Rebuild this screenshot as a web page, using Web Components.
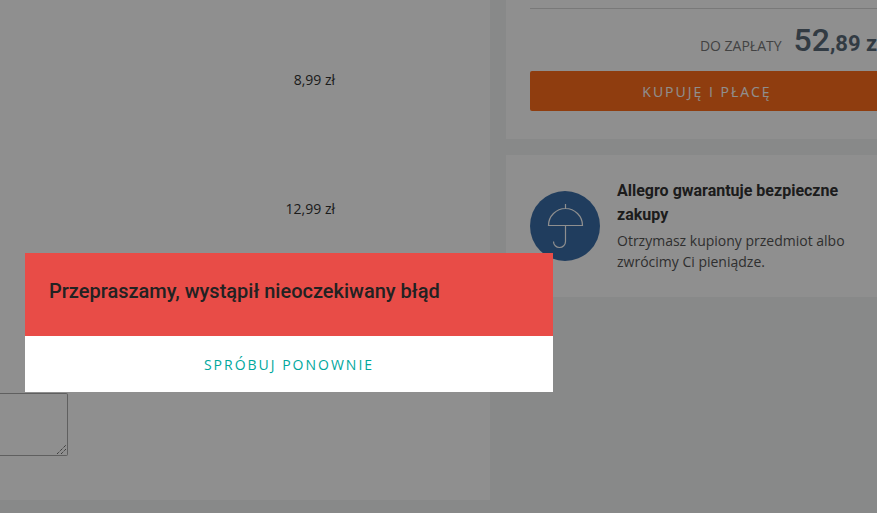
<!DOCTYPE html>
<html lang="pl"><head><meta charset="utf-8"><title>Allegro</title>
<style>
html,body{margin:0;padding:0;height:100%;overflow:hidden;background:#f3f4f5}
</style></head>
<body>
<checkout-page>
  <items-panel slot="left">
    <price-row style="--top:70px">8,99 zł</price-row>
    <price-row style="--top:111px">12,99 zł</price-row>
  </items-panel>
  <summary-panel slot="right" amount="52" cents=",89 zł">KUPUJĘ I PŁACĘ</summary-panel>
  <guarantee-panel slot="right" heading="Allegro gwarantuje bezpieczne zakupy">Otrzymasz kupiony przedmiot albo zwrócimy Ci pieniądze.</guarantee-panel>
</checkout-page>
<page-overlay></page-overlay>
<error-modal action="SPRÓBUJ PONOWNIE">Przepraszamy, wystąpił nieoczekiwany błąd</error-modal>
<script>
function def(name,html,init){customElements.define(name,class extends HTMLElement{constructor(){super();this.attachShadow({mode:'open'}).innerHTML=html;}connectedCallback(){if(init)init(this,this.shadowRoot);}});}
def('checkout-page',`<style>
:host{display:flex;gap:16px;width:877px;height:513px;overflow:hidden;box-sizing:border-box;padding-bottom:13px;background:#f3f4f5}
.l{flex:0 0 490px;display:flex}.r{flex:0 0 402px;display:flex;flex-direction:column;gap:16px;align-items:stretch}
::slotted(*){}
</style><div class="l"><slot name="left"></slot></div><div class="r"><slot name="right"></slot></div>`);
def('items-panel',`<style>
:host{display:flex;flex-direction:column;background:#fff;width:490px;height:500px;box-sizing:border-box;padding-right:155px;font:14px/20px "Open Sans",sans-serif;color:#333}
.t{margin-top:auto;margin-bottom:44px;width:68px;height:63px;box-sizing:border-box;border:1px solid #a9a9a9;border-left:0;border-radius:0 2px 2px 0;position:relative;background:#fff}
svg{position:absolute;right:0;bottom:0}
</style><slot></slot><div class="t"><svg width="12" height="12" viewBox="0 0 12 12"><path d="M2 11 11 2M6 11 11 6" stroke="#333" stroke-width="1" stroke-dasharray="1 1" fill="none"/></svg></div>`);
def('price-row',`<style>:host{display:block;text-align:right;margin-top:var(--top);height:20px;margin-bottom:-2px}</style><slot></slot>`);
def('summary-panel',`<style>
:host{display:block;background:#fff;height:139px;box-sizing:border-box;padding:8px 24px 0;flex:none}
hr{margin:0;border:0;border-top:1px solid #d8d8d8}
.p{display:flex;justify-content:flex-end;align-items:baseline;height:62px;white-space:nowrap}
.l{font:14px/20px "Open Sans",sans-serif;color:#777;margin-right:12px}
.a{font:500 32px/62px Roboto,sans-serif;color:#5a6a78}
.c{font:700 22px/62px Roboto,sans-serif;color:#5a6a78}
button{display:block;width:100%;height:40px;border:0;border-radius:2px;background:#ff6e1b;color:#fff;font:14px "Open Sans",sans-serif;letter-spacing:2px;padding:0}
</style><hr><div class="p"><span class="l">DO ZAPŁATY</span><span class="a"></span><span class="c"></span></div><button><slot></slot></button>`,(h,s)=>{s.querySelector('.a').textContent=h.getAttribute('amount');s.querySelector('.c').textContent=h.getAttribute('cents');});
def('guarantee-panel',`<style>
:host{display:flex;gap:17px;background:#fff;height:142px;box-sizing:border-box;padding:36px 24px 0;flex:none}
.i{flex:none;width:70px;height:70px;border-radius:50%;background:#3a6ea8;display:flex;align-items:center;justify-content:center;margin-top:0}
.t{width:240px;margin-top:-12px}
h3{margin:0 0 3px;font:700 16px/24px Roboto,sans-serif;color:#333}
p{margin:0;font:14px/21px "Open Sans",sans-serif;color:#555}
</style><div class="i"><svg width="70" height="70" viewBox="0 0 70 70" fill="none" stroke="#fff" stroke-width="1.2"><path d="M18.5 34.5a17 17 0 0 1 34 0zM35.5 13v4.5M35.5 34.5v16a6 6 0 0 1-12 0"/></svg></div><div class="t"><h3></h3><p><slot></slot></p></div>`,(h,s)=>{s.querySelector('h3').textContent=h.getAttribute('heading');});
def('page-overlay',`<style>:host{display:block;position:fixed;inset:0;background:rgba(0,0,0,.44)}</style>`);
def('error-modal',`<style>
:host{display:block;position:fixed;left:25px;top:253px;width:528px}
.m{background:#e84c47;height:83px;box-sizing:border-box;padding:24px;font:500 20px/28px Roboto,sans-serif;color:#222}
.b{background:#fff;height:56px;display:flex;align-items:center;justify-content:center;font:14px "Open Sans",sans-serif;letter-spacing:2px;color:#00a79d}
</style><div class="m"><slot></slot></div><div class="b"></div>`,(h,s)=>{s.querySelector('.b').textContent=h.getAttribute('action');});
</script>
</body></html>
